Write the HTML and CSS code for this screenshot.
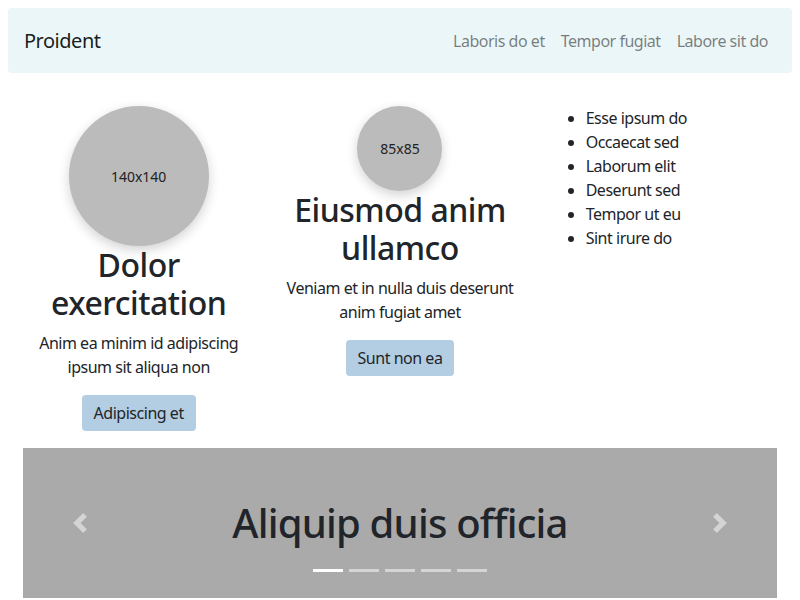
FILE: index.html
```html
<!DOCTYPE html>
<html lang="en">
<head>
<meta charset="utf-8">
<title>Proident</title>
<link rel="stylesheet" href="styles.css">
</head>
<body>
<nav class="navbar">
  <span class="brand">Proident</span>
  <div class="nav-links">
    <a class="nav-link" href="#">Laboris do et</a>
    <a class="nav-link" href="#">Tempor fugiat</a>
    <a class="nav-link" href="#">Labore sit do</a>
  </div>
</nav>
<main class="content">
  <div class="row">
    <div class="col center">
      <div class="avatar avatar-lg">140x140</div>
      <h2 class="title">Dolor exercitation</h2>
      <p class="text">Anim ea minim id adipiscing ipsum sit aliqua non</p>
      <a class="btn" href="#">Adipiscing et</a>
    </div>
    <div class="col center">
      <div class="avatar avatar-sm">85x85</div>
      <h2 class="title">Eiusmod anim ullamco</h2>
      <p class="text">Veniam et in nulla duis deserunt anim fugiat amet</p>
      <a class="btn" href="#">Sunt non ea</a>
    </div>
    <div class="col">
      <ul class="list">
        <li>Esse ipsum do</li>
        <li>Occaecat sed</li>
        <li>Laborum elit</li>
        <li>Deserunt sed</li>
        <li>Tempor ut eu</li>
        <li>Sint irure do</li>
      </ul>
    </div>
  </div>
  <section class="carousel">
    <a class="control" href="#" aria-label="Previous">
      <svg width="20" height="20" viewBox="0 0 8 8"><path fill="#fff" d="M5.25 0l-4 4 4 4 1.5-1.5L4.25 4l2.5-2.5L5.25 0z"/></svg>
    </a>
    <h1 class="slide-title">Aliquip duis officia</h1>
    <a class="control" href="#" aria-label="Next">
      <svg width="20" height="20" viewBox="0 0 8 8"><path fill="#fff" d="M2.75 0l-1.5 1.5L3.75 4l-2.5 2.5L2.75 8l4-4-4-4z"/></svg>
    </a>
    <ol class="indicators">
      <li class="active"></li>
      <li></li>
      <li></li>
      <li></li>
      <li></li>
    </ol>
  </section>
</main>
</body>
</html>
```
FILE: styles.css
```css
* { box-sizing: border-box; }
body {
  margin: 8px;
  font-family: "Noto Sans", "Open Sans", sans-serif;
  font-size: 16px;
  line-height: 1.5;
  letter-spacing: -0.03em;
  color: #212529;
  background: #fff;
}
.navbar {
  display: flex;
  align-items: center;
  justify-content: space-between;
  height: 65px;
  padding: 1px 16px 0;
  background: #ebf6f8;
  border-radius: 4px;
}
.brand {
  font-size: 20px;
  line-height: 30px;
  color: rgba(0,0,0,.9);
}
.nav-links { display: flex; }
.nav-link {
  padding: 8px;
  color: rgba(0,0,0,.5);
  text-decoration: none;
  line-height: 24px;
}
.content { margin-top: 33px; }
.row {
  display: grid;
  grid-template-columns: 1fr 1fr 1fr;
}
.col { padding: 0 15px; }
.center {
  display: flex;
  flex-direction: column;
  align-items: center;
  text-align: center;
}
.avatar {
  display: flex;
  align-items: center;
  justify-content: center;
  border-radius: 50%;
  background: #bbbbbb;
  box-shadow: 0 4px 12px rgba(0,0,0,.18);
  font-size: 14px;
  letter-spacing: 0;
  color: #222;
}
.avatar-lg { width: 140px; height: 140px; }
.avatar-sm { width: 85px; height: 85px; }
.title {
  margin: 0 0 8px;
  font-size: 32px;
  line-height: 1.2;
  font-weight: 500;
}
.text { margin: 0 0 16px; }
.btn {
  display: inline-block;
  padding: 6px 12px;
  background: #b3cde2;
  color: #212529;
  border-radius: 4px;
  text-decoration: none;
  line-height: 24px;
  margin-bottom: 17px;
}
.list {
  margin: 0;
  padding-left: 40px;
}
.carousel {
  position: relative;
  margin: 0 15px;
  height: 150px;
  background: #aaaaaa;
  display: flex;
  align-items: center;
  justify-content: space-between;
}
.control {
  width: 15%;
  display: flex;
  justify-content: center;
  align-items: center;
  opacity: .5;
}
.slide-title {
  margin: 0;
  font-size: 40px;
  line-height: 1.2;
  font-weight: 500;
  letter-spacing: -0.02em;
  text-align: center;
}
.indicators {
  position: absolute;
  left: 0;
  right: 0;
  bottom: 0;
  margin: 0 0 16px;
  padding: 0;
  list-style: none;
  display: flex;
  justify-content: center;
}
.indicators li {
  width: 30px;
  height: 3px;
  margin: 0 3px 10px;
  background: rgba(255,255,255,.5);
}
.indicators li.active { background: #fff; }
```
